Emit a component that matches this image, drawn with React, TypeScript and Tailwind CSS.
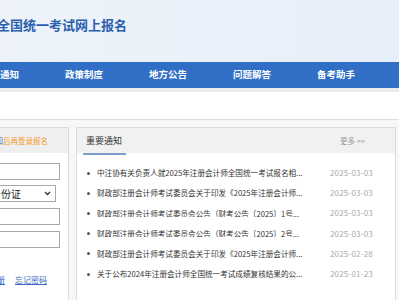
const NAV = ["报考通知", "政策制度", "地方公告", "问题解答", "备考助手"]

const NEWS = [
  { t: "中注协有关负责人就2025年注册会计师全国统一考试报名相...", d: "2025-03-03" },
  { t: "财政部注册会计师考试委员会关于印发《2025年注册会计师...", d: "2025-03-03" },
  { t: "财政部注册会计师考试委员会公告（财考公告〔2025〕1号...", d: "2025-03-03" },
  { t: "财政部注册会计师考试委员会公告（财考公告〔2025〕2号...", d: "2025-03-03" },
  { t: "财政部注册会计师考试委员会关于印发《2025年注册会计师...", d: "2025-02-28" },
  { t: "关于公布2024年注册会计师全国统一考试成绩复核结果的公...", d: "2025-01-23" },
]

export default function App() {
  return (
    <div
      className="w-[399px] h-[300px] overflow-hidden bg-white"
      style={{ fontFamily: '"Noto Sans CJK SC", "Noto Sans", sans-serif' }}
    >
      {/* Header */}
      <div className="h-[62px] bg-gradient-to-r from-[#eef3fa] to-[#e6eff9] flex items-center">
        <h1 className="ml-[-3px] mt-[-14px] text-[13px] font-bold text-[#2b5fae] leading-none whitespace-nowrap">
          全国统一考试网上报名
        </h1>
      </div>

      {/* Nav */}
      <div className="h-[26px] bg-[#316fc6] flex items-center overflow-hidden">
        <div className="flex ml-[-42px]">
          {NAV.map(n => (
            <span key={n} className="w-[84px] shrink-0 text-center text-[9.5px] font-bold text-white leading-none">
              {n}
            </span>
          ))}
        </div>
      </div>
      <div className="h-[4px] bg-[#ececec]" />
      <div className="h-[28px] bg-white border-b border-[#dedede]" />

      {/* Content */}
      <div className="flex pt-[7px] bg-[#f7f7f7] h-[200px]">
        {/* Login panel */}
        <div className="w-[69px] shrink-0 overflow-hidden">
          <div className="w-[200px] ml-[-131px] bg-white border border-[#dcdcdc] h-[200px]">
            <div className="h-[25px] bg-[#efefef] flex items-center justify-end pr-[20px] text-[7.5px] whitespace-nowrap">
              <span className="text-[#3a73c9]">知</span>
              <span className="text-[#f39a2b]">后再登录报名</span>
            </div>
            <div className="flex flex-col items-end pr-[8px] pt-[10px] gap-[6px]">
              <div className="w-[150px] h-[17px] border border-[#a9a9a9] bg-white" />
              <div className="w-[146px] h-[17px] border border-[#a9a9a9] bg-white flex items-center justify-between pl-[100px] pr-[4px] mr-[4px] mt-[-1px]">
                <span className="text-[10px] text-[#222] leading-none whitespace-nowrap ml-[-20px]">身份证</span>
                <svg width="7" height="5" viewBox="0 0 7 5">
                  <path d="M1 1l2.5 2.5L6 1" fill="none" stroke="#333" strokeWidth="1.3" />
                </svg>
              </div>
              <div className="w-[150px] h-[17px] border border-[#a9a9a9] bg-white" />
              <div className="w-[150px] h-[17px] border border-[#a9a9a9] bg-white" />
            </div>
            <div className="flex justify-end gap-[10px] pr-[21px] pt-[26px] text-[8px] text-[#3a66c4] whitespace-nowrap">
              <span className="underline">用户注册</span>
              <span className="underline">忘记密码</span>
            </div>
          </div>
        </div>

        {/* News panel */}
        <div className="ml-[7px] w-[320px] shrink-0 bg-white border border-[#dcdcdc] h-[200px]">
          <div className="h-[25px] bg-[#f1f1f1] flex items-center justify-between pl-[8px] pr-[30px]">
            <div className="relative h-full flex items-center">
              <span className="text-[9px] text-[#333] px-[1px] leading-none">重要通知</span>
              <span className="absolute left-[-2px] right-[-3px] bottom-[-2px] h-[2px] bg-[#7b9cc8]" />
            </div>
            <span className="text-[7.5px] text-[#9a9a9a] leading-none">更多 &gt;&gt;</span>
          </div>
          <ul className="pt-[10px] pl-[8px] pr-[22px]">
            {NEWS.map((n, i) => (
              <li key={i} className="h-[20.2px] flex items-center text-[7.6px] leading-none">
                <span className="w-[3px] h-[3px] bg-[#555] rounded-full shrink-0 ml-[2px]" />
                <span className="ml-[7px] w-[224px] whitespace-nowrap overflow-hidden text-[#333]">{n.t}</span>
                <span className="ml-auto text-[#aaa] text-[8px] tracking-[0.2px]">{n.d}</span>
              </li>
            ))}
          </ul>
        </div>
      </div>
    </div>
  )
}
